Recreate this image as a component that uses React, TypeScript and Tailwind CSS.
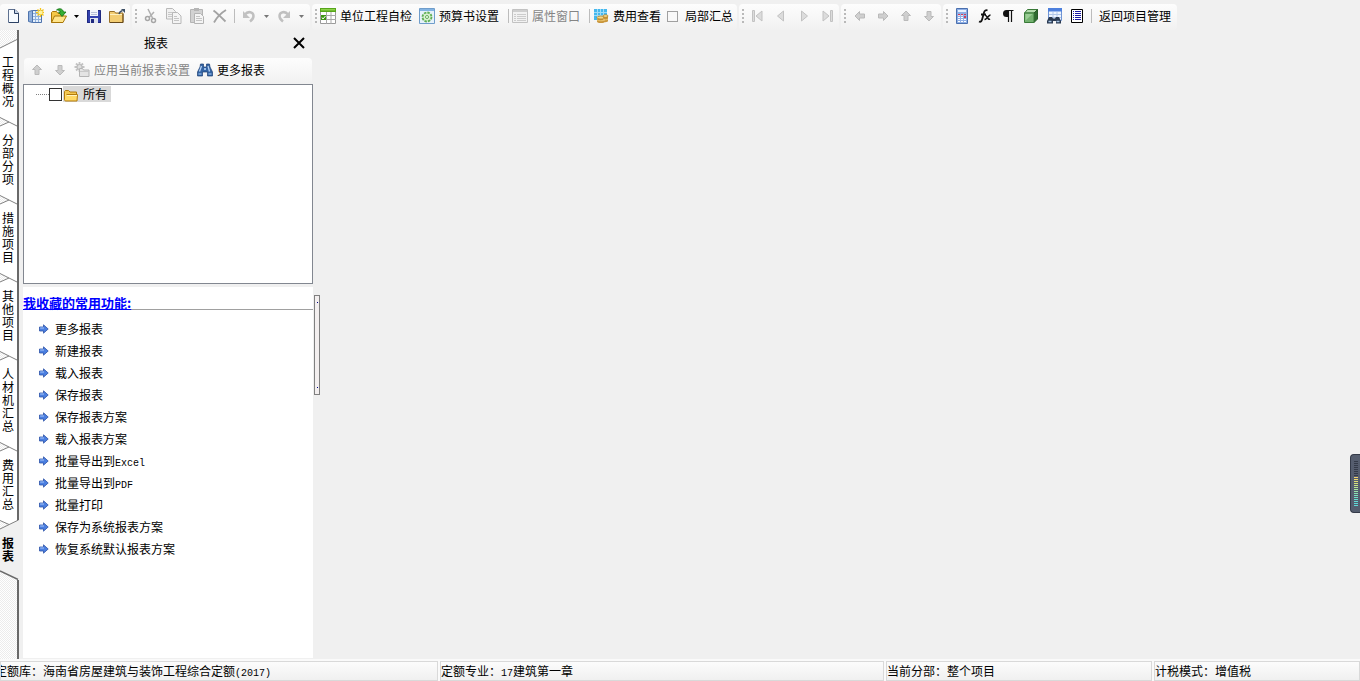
import React from 'react';
import clsx from 'clsx';

interface IconProps {
  children: React.ReactNode;
  size?: number;
}

const Icon: React.FC<IconProps> = ({ children, size = 16 }) => (
  <svg width={size} height={size} viewBox={`0 0 ${size} ${size}`} fill="none" className="shrink-0" aria-hidden="true">
    {children}
  </svg>
);

/* File icons */

const NewIcon = () => (
  <Icon>
    <path d="M3.5 1.5h6.5l3.5 3.5v9.5h-10z" fill="#f7fbff" stroke="#5f7190" />
    <path d="M4 14.5h9.5v-9" stroke="#2c4164" />
    <path d="M9.5 1.5v4h4" fill="#c5d5ea" stroke="#2c4164" />
  </Icon>
);

const NewProjectIcon = () => (
  <Icon>
    <path d="M.5 3.500l4-1v12l-4-1z" fill="#8fafdc" stroke="#4f74ad" />
    <path d="M4.500 2.500h9v12h-9z" fill="#e4effb" stroke="#4f74ad" />
    <path d="M5 5.500h8M5 8.500h8M5 11.500h8M7.500 3v11M10.500 3v11M1 6.500h3M1 9.500h3" stroke="#8fb0dc" />
    <path d="M12.500 0v9M8 4.500h8M9.500 1.500l6 6M15.500 1.500l-6 6" stroke="#f5c518" strokeWidth="1.300" />
    <circle cx="12.500" cy="4.500" r="2" fill="#fff3a0" />
  </Icon>
);

const OpenIcon = () => (
  <Icon>
    <path d="M.5 14.500v-10l1-1h4l1.500 2h5v3" fill="#f5c848" stroke="#a87608" />
    <path d="M.5 14.500l3-6.500h12l-3.500 6.500z" fill="#ffe48a" stroke="#a87608" />
    <path d="M5.500 2C8.500-.5 12 1 12.500 4H15l-4 4.500L7.500 4h2C9.200 2.500 7.500 1.800 5.500 2z" fill="#35b035" stroke="#137313" strokeWidth=".8" />
  </Icon>
);

const SaveIcon = () => (
  <Icon>
    <path d="M1 2h13l1 1v12H1z" fill="#3341ae" />
    <path d="M1.500 2.500h13v12h-13z" stroke="#202a80" />
    <path d="M4 2h8v6H4z" fill="#f2f4fb" />
    <path d="M5 4.500h6M5 6.500h6" stroke="#b6bfd8" />
    <path d="M4 10h8v5H4z" fill="#dfe3ee" />
    <path d="M5 11h3v4H5z" fill="#202a80" />
  </Icon>
);

const ExportFolderIcon = () => (
  <Icon>
    <path d="M.5 14.500v-11h5l1 1.500h7.500v9.500z" fill="#f3cd73" stroke="#987029" />
    <path d="M1 6.500h12" stroke="#fff1c0" />
    <path d="M1 14.500h13V6" stroke="#67491a" />
    <path d="M10 6c.5-2 1.500-3 3.500-3.500" stroke="#3c4f65" strokeWidth="1.500" />
    <path d="M12 1h4v4z" fill="#3c4f65" />
  </Icon>
);

/* Editing icons, all of them in their disabled look */

const CutIcon = () => (
  <Icon>
    <path d="M5 1l4.500 9M11 4l-5 5.500" stroke="#b0b0b0" strokeWidth="1.500" />
    <circle cx="4.500" cy="10.500" r="2" stroke="#a6a6a6" strokeWidth="1.500" />
    <circle cx="10.500" cy="12.500" r="2" stroke="#a6a6a6" strokeWidth="1.500" />
  </Icon>
);

const CopyIcon = () => (
  <Icon>
    <path d="M.5.5h6l3 3v7.500h-9z" fill="#f1f1f1" stroke="#b8b8b8" />
    <path d="M2 4.500h5M2 6.500h5M2 8.500h4" stroke="#c8c8c8" />
    <path d="M6.500 4.500h5l3.500 3.500v7.500h-8.500z" fill="#f4f4f4" stroke="#b8b8b8" />
    <path d="M8 8.500h3M8 10.500h5M8 12.500h5" stroke="#c4c4c4" />
  </Icon>
);

const PasteIcon = () => (
  <Icon>
    <path d="M1.500 1.500h12v13h-12z" fill="#d2d2d2" stroke="#b4b4b4" />
    <path d="M5 0h5v3H5z" fill="#b5b5b5" />
    <path d="M5.500 5.500h6l3 3v7h-9z" fill="#f4f4f4" stroke="#b4b4b4" />
    <path d="M7 8.500h4M7 10.500h6M7 12.500h6" stroke="#c4c4c4" />
  </Icon>
);

const DeleteIcon = () => (
  <Icon>
    <path d="M1.500 2.500c4 3 8 7 12 11M14 2C9 5 5 9 2 14.500" stroke="#a3a3a3" strokeWidth="1.800" />
  </Icon>
);

const UndoIcon = ({ flip = false }: { flip?: boolean }) => (
  <Icon>
    <g transform={flip ? 'matrix(-1 0 0 1 16 0)' : undefined}>
      <path d="M4 6.500C7 2.500 12.500 4 12.500 8c0 2.500-1.500 4-3.500 5.500" stroke="#c0c0c0" strokeWidth="2.500" />
      <path d="M2 3v7h7z" fill="#c2c2c2" />
    </g>
  </Icon>
);

/* Project icons */

const CheckTableIcon = () => (
  <Icon>
    <path d="M.5 1.500h15v14H.5z" fill="#fff" stroke="#9b9b9b" />
    <path d="M0 0h16v4H0z" fill="#57a51b" />
    <path d="M1 1h14v1.500H1z" fill="#8ed34b" />
    <path d="M0 7.500h16M0 11.500h16M6.500 4v12M11 4v12" stroke="#a9a9a9" />
    <path d="M1 7h5v5H1z" fill="#3c9614" />
    <path d="M2 9.500l1 1.500 2.500-3" stroke="#fff" />
  </Icon>
);

const SettingsIcon = () => (
  <Icon>
    <path d="M.5.5h15v15H.5z" fill="#e6f2fb" stroke="#6f9dcb" />
    <path d="M1 1h14v2H1z" fill="#83b4e3" />
    <circle cx="8" cy="9" r="4.500" fill="#d9f0d1" stroke="#5fae55" strokeWidth="1.800" strokeDasharray="2.500 1" />
    <circle cx="8" cy="9" r="1.500" fill="#fff" stroke="#5fae55" />
  </Icon>
);

const PropertyIcon = () => (
  <Icon>
    <path d="M.5 1.500h15v13H.5z" fill="#f2f2f2" stroke="#c2c2c2" />
    <path d="M1 2h14v2H1z" fill="#cfcfcf" />
    <path d="M2 6.500h2M5 6.500h9M2 8.500h2M5 8.500h9M2 10.500h2M5 10.500h9M2 12.500h2M5 12.500h9" stroke="#cccccc" />
  </Icon>
);

const CostIcon = () => (
  <Icon>
    <path d="M1 1h13v11H1z" fill="#45b8ee" />
    <path d="M1 4.500h13M1 7.500h13M4.500 1v11M7.500 1v11M10.500 1v11" stroke="#9fdcf8" />
    <path d="M4 9.500v4c0 2 8 2 8 0v-4z" fill="#c9953a" />
    <ellipse cx="8" cy="9.500" rx="4" ry="1.500" fill="#f5d888" stroke="#b07d22" strokeWidth=".7" />
    <path d="M10 8v5c0 1.500 5 1.500 5 0V8z" fill="#c9953a" />
    <ellipse cx="12.500" cy="8" rx="2.500" ry="1.300" fill="#f5d888" stroke="#b07d22" strokeWidth=".7" />
    <path d="M4 12c1 1 6 1 8 0M10 11c1 1 4 1 5 0" stroke="#f5d888" strokeWidth=".7" />
  </Icon>
);

/* Navigation icons */

const JumpIcon = ({ flip = false, bar = false }: { flip?: boolean; bar?: boolean }) => (
  <Icon>
    <g transform={flip ? 'matrix(-1 0 0 1 16 0)' : undefined} stroke="#c2c2c2" fill="#dcdcdc">
      {bar && <path d="M2.500 2.500h2v11h-2z" />}
      <path d={bar ? 'M12 3v10L6 8z' : 'M10.500 3v10L4.500 8z'} />
    </g>
  </Icon>
);

const ArrowIcon = ({ turn }: { turn: number }) => (
  <Icon>
    <path
      d="M3 8l4.500-4.500v2.500h5v4h-5v2.500z"
      fill="#cfcfcf"
      stroke="#bababa"
      transform={`rotate(${turn} 8 8)`}
    />
  </Icon>
);

/* Tool icons */

const CalculatorIcon = () => (
  <Icon>
    <path d="M2.500.5h11v15h-11z" fill="#8fb0e6" stroke="#4a6fae" />
    <path d="M4 2h8v2H4z" fill="#e8f2ff" />
    <path d="M4 9h2v1H4zM7 9h2v1H7zM4 11h2v1H4zM7 11h2v1H7zM10 11h2v1h-2zM4 13h2v1H4zM7 13h2v1H7zM10 13h2v1h-2z" fill="#fff" />
    <path d="M4 6h2v2H4zM7 6h2v2H7z" fill="#f4dfe8" />
    <path d="M4 6h2v1H4zM7 6h2v1H7zM10 6h2v1h-2zM10 8h2v2h-2z" fill="#cf3f5c" />
  </Icon>
);

const FunctionIcon = () => (
  <Icon>
    <path d="M2 13.500c2 1 3-1 3.500-3.500L7 4.500c.5-2 2-2.800 3.500-2M4 6.500h5" stroke="#111" strokeWidth="1.800" />
    <path d="M8 7.500c2-1 2.500 5 5 3.500M13.500 7C11.500 7 10 11.500 7.500 11.500" stroke="#111" strokeWidth="1.500" />
  </Icon>
);

const PilcrowIcon = () => (
  <Icon>
    <path d="M13 2H6.500a3.500 3.500 0 000 7H8V2z" fill="#111" />
    <path d="M8.500 2v12M11.500 2v12M7 2.500h6.500" stroke="#111" strokeWidth="1.200" />
  </Icon>
);

const CubeIcon = () => (
  <Icon>
    <path d="M1.500 5l3-3.500h10L11 5z" fill="#b4dcae" stroke="#397a38" />
    <path d="M11 5l3.500-3.500V11L11 14.500z" fill="#2f6b30" stroke="#285c29" />
    <path d="M1.500 5H11v9.500H1.500z" fill="#74b270" stroke="#397a38" />
    <path d="M2.500 6h7l-7 6.500z" fill="#9acd94" />
  </Icon>
);

const FindTableIcon = () => (
  <Icon>
    <path d="M2.500.5h13v12h-13z" fill="#eef5ff" stroke="#6f94d4" />
    <path d="M2 0h14v3.500H2z" fill="#4e80dd" />
    <path d="M3 6.500h12M3 9.500h12M7 4v8M11 4v8" stroke="#b0c7ea" />
    <path d="M3 9h3l1 1.500h2l1-1.500h3l2 4v2.500h-5V13H7v2.500H1V13z" fill="#2a3a52" />
    <path d="M2.500 13.500h3M10.500 13.500h3" stroke="#a9c6e6" strokeWidth="1.500" />
  </Icon>
);

const ListIcon = () => (
  <Icon>
    <path d="M2.500 1.500h11v13h-11z" fill="#fff" stroke="#000" />
    <path d="M4 3.500h1M6 3.500h6M4 5.500h1M6 5.500h6M4 7.500h1M6 7.500h6M4 9.500h1M6 9.500h6M4 11.500h1M6 11.500h6" stroke="#1b1ba4" />
  </Icon>
);

const ApplyIcon = () => (
  <Icon>
    <path d="M5.500 0v10M.5 5h10M2 1.500l7 7M9 1.500l-7 7" stroke="#c3c3c3" strokeWidth="1.800" />
    <circle cx="5.500" cy="5" r="2.500" fill="#dedede" stroke="#b9b9b9" />
    <path d="M5.500 6.500h3l1 1.500h5.500v6.500H5.500z" fill="#e4e4e4" stroke="#b4b4b4" />
    <path d="M6 9.500h9" stroke="#c9c9c9" />
  </Icon>
);

const BinocularsIcon = () => (
  <Icon>
    <path d="M3.500 2h3v3h3V2h3l.5 3 2.500 5v4h-5v-4h-5v4h-5v-4L3 5z" fill="#3464a4" stroke="#1d3f74" strokeWidth=".7" />
    <path d="M4.500 4L2.500 9.500M11 4l1.500 5.500" stroke="#b5d2f4" strokeWidth="1.300" />
    <path d="M1.500 12h3M11.500 12h3" stroke="#86afe0" strokeWidth="1.500" />
    <path d="M7 6h2v2H7z" fill="#9cc0ec" />
  </Icon>
);

const FolderIcon = () => (
  <Icon>
    <path d="M1.500 13.500v-8l1-1h3l1.500 1.500h6.500v2" fill="#f3c64f" stroke="#b27a0c" />
    <path d="M3.500 8.500h11l-.5 6.500H3c-1 0-1.500-.5-1.500-1.500V6" fill="#ffd965" stroke="#b27a0c" />
    <path d="M4 9.500h10" stroke="#fff3bd" />
  </Icon>
);

const BulletIcon = () => (
  <Icon size={10}>
    <path d="M.5 3h4V.8L9.200 5 4.500 9.200V7h-4z" fill="#4b7fe0" stroke="#2d53a8" strokeWidth=".8" />
    <path d="M1.200 4h3.800" stroke="#a9c8fa" />
  </Icon>
);

/* Toolbar parts */

const Group: React.FC<{ children: React.ReactNode; grip?: boolean; className?: string }> = ({
  children,
  grip = true,
  className,
}) => (
  <div className={clsx('flex items-center rounded-sm bg-linear-to-b from-[#fdfdfd] to-[#f1f1f1] pb-0.5', className)}>
    {grip && (
      <span className="flex w-[7px] flex-col items-center gap-0.5">
        <i className="size-0.5 bg-[#b9b9b9]" />
        <i className="size-0.5 bg-[#b9b9b9]" />
        <i className="size-0.5 bg-[#b9b9b9]" />
        <i className="size-0.5 bg-[#b9b9b9]" />
      </span>
    )}
    {children}
  </div>
);

const IconButton: React.FC<{ label: string; disabled?: boolean; children: React.ReactNode }> = ({
  label,
  disabled,
  children,
}) => (
  <button type="button" aria-label={label} disabled={disabled} className="flex h-6 w-[23px] items-center justify-center">
    {children}
  </button>
);

const TextButton: React.FC<{ icon: React.ReactNode; disabled?: boolean; children: React.ReactNode }> = ({
  icon,
  disabled,
  children,
}) => (
  <button
    type="button"
    disabled={disabled}
    className="flex h-6 items-center gap-1 pr-1.5 pl-px whitespace-nowrap disabled:text-[#858585]"
  >
    {icon}
    {children}
  </button>
);

const Caret: React.FC<{ label: string; disabled?: boolean }> = ({ label, disabled }) => (
  <button type="button" aria-label={label} disabled={disabled} className="flex h-6 w-3 items-center justify-center text-black disabled:text-[#777]">
    <svg width="5" height="3" viewBox="0 0 5 3" aria-hidden="true">
      <path d="M0 0h5L2.500 3z" fill="currentColor" />
    </svg>
  </button>
);

const Separator = () => (
  <span className="flex w-1.5 justify-center">
    <i className="h-[14px] w-px bg-[#bcbcbc]" />
  </span>
);

const Toolbar = () => (
  <div className="flex h-[30px] gap-0.5 pt-1">
    <Group grip={false} className="pr-0.5 pl-px">
      <IconButton label="新建"><NewIcon /></IconButton>
      <IconButton label="新建项目"><NewProjectIcon /></IconButton>
      <IconButton label="打开"><OpenIcon /></IconButton>
      <Caret label="打开列表" />
      <IconButton label="保存"><SaveIcon /></IconButton>
      <IconButton label="导出"><ExportFolderIcon /></IconButton>
    </Group>
    <Group className="pr-[3px]">
      <IconButton label="剪切" disabled><CutIcon /></IconButton>
      <IconButton label="复制" disabled><CopyIcon /></IconButton>
      <IconButton label="粘贴" disabled><PasteIcon /></IconButton>
      <IconButton label="删除" disabled><DeleteIcon /></IconButton>
      <Separator />
      <IconButton label="撤销" disabled><UndoIcon /></IconButton>
      <Caret label="撤销列表" disabled />
      <IconButton label="恢复" disabled><UndoIcon flip /></IconButton>
      <Caret label="恢复列表" disabled />
    </Group>
    <Group className="pr-1">
      <TextButton icon={<CheckTableIcon />}>单位工程自检</TextButton>
      <TextButton icon={<SettingsIcon />}>预算书设置</TextButton>
      <Separator />
      <TextButton icon={<PropertyIcon />} disabled>属性窗口</TextButton>
      <Separator />
      <TextButton icon={<CostIcon />}>费用查看</TextButton>
      <label className="flex items-center gap-[7px] whitespace-nowrap">
        <input type="checkbox" className="size-[11px] appearance-none border border-[#a0a0a0] bg-[#f8f8f8] checked:bg-[#555]" />
        局部汇总
      </label>
    </Group>
    <Group className="pr-px">
      <IconButton label="第一页" disabled><JumpIcon bar /></IconButton>
      <IconButton label="上一页" disabled><JumpIcon /></IconButton>
      <IconButton label="下一页" disabled><JumpIcon flip /></IconButton>
      <IconButton label="最后一页" disabled><JumpIcon flip bar /></IconButton>
    </Group>
    <Group className="pr-px">
      <IconButton label="左移" disabled><ArrowIcon turn={0} /></IconButton>
      <IconButton label="右移" disabled><ArrowIcon turn={180} /></IconButton>
      <IconButton label="上移" disabled><ArrowIcon turn={90} /></IconButton>
      <IconButton label="下移" disabled><ArrowIcon turn={270} /></IconButton>
    </Group>
    <Group>
      <IconButton label="计算器"><CalculatorIcon /></IconButton>
      <IconButton label="函数"><FunctionIcon /></IconButton>
      <IconButton label="特殊符号"><PilcrowIcon /></IconButton>
      <IconButton label="图元"><CubeIcon /></IconButton>
      <IconButton label="查找"><FindTableIcon /></IconButton>
      <IconButton label="列表"><ListIcon /></IconButton>
      <Separator />
      <button type="button" className="h-6 pr-1.5 pl-[5px] whitespace-nowrap">返回项目管理</button>
    </Group>
  </div>
);

/* Vertical tabs on the left edge */

const TABS = ['工程概况', '分部分项', '措施项目', '其他项目', '人材机汇总', '费用汇总'];

const HATCH = 'bg-[repeating-conic-gradient(#fff_0_25%,#ececec_0_50%)] bg-[length:2px_2px]';

type EdgeKind = 'first' | 'between' | 'active' | 'last';

const TabEdge: React.FC<{ kind: EdgeKind }> = ({ kind }) => (
  <svg width="19" height="10" viewBox="0 0 19 10" className={clsx('block shrink-0', HATCH)} fill="none" aria-hidden="true">
    {kind === 'first' && (
      <>
        <path d="M0 9L18 0v10H0z" fill="#fff" />
        <path d="M0 9L18 0" stroke="#808080" />
        <path d="M18 0v10" stroke="#696969" strokeWidth="2" />
      </>
    )}
    {kind === 'between' && (
      <>
        <path d="M0 0h18v10H0V9l9-4.500z" fill="#fff" />
        <path d="M0 .5L18 9.500M0 9l9-4" stroke="#808080" />
        <path d="M18 0v10" stroke="#696969" strokeWidth="2" />
      </>
    )}
    {kind === 'active' && (
      <>
        <path d="M0 0h18L9 4.500z" fill="#fff" />
        <path d="M19 0v10H0V9L18 0z" fill="#f0f0f0" />
        <path d="M0 .5l9 4M0 9L18.500 0" stroke="#808080" />
      </>
    )}
    {kind === 'last' && (
      <>
        <path d="M0 0h19v10L0 1z" fill="#f0f0f0" />
        <path d="M0 1l18 8.500" stroke="#696969" strokeWidth="1.500" />
      </>
    )}
  </svg>
);

const SideTabs = () => (
  <nav className="flex w-[19px] shrink-0 flex-col">
    <div className={clsx('h-[9px] shrink-0 border-r-2 border-[#696969]', HATCH)} />
    {TABS.map((tab, index) => (
      <button key={tab} type="button" className="block shrink-0 text-left">
        <TabEdge kind={index === 0 ? 'first' : 'between'} />
        <span className="block border-r-2 border-[#696969] bg-white pt-1.5 pb-2.5 pl-0.5">
          <span className="block w-[13px] leading-[13px] break-all">{tab}</span>
        </span>
      </button>
    ))}
    <button type="button" className="block shrink-0 text-left font-bold">
      <TabEdge kind="active" />
      <span className="block pt-1.5 pb-2 pl-0.5">
        <span className="block w-[13px] leading-[13px] break-all">报表</span>
      </span>
      <TabEdge kind="last" />
    </button>
    <div className={clsx('flex-1 border-r-2 border-[#696969]', HATCH)} />
  </nav>
);

/* Report panel */

const FAVORITES: { text: string; latin?: string }[] = [
  { text: '更多报表' },
  { text: '新建报表' },
  { text: '载入报表' },
  { text: '保存报表' },
  { text: '保存报表方案' },
  { text: '载入报表方案' },
  { text: '批量导出到', latin: 'Excel' },
  { text: '批量导出到', latin: 'PDF' },
  { text: '批量打印' },
  { text: '保存为系统报表方案' },
  { text: '恢复系统默认报表方案' },
];

// half-width characters take half of a 12px ideograph
const Latin: React.FC<{ children: React.ReactNode }> = ({ children }) => (
  <span className="font-['Liberation_Mono',monospace] text-[10px] leading-none">{children}</span>
);

const ReportPanel = () => (
  <aside className="ml-1 flex w-[290px] shrink-0 flex-col">
    <header className="flex h-7 items-center pr-2 pb-0.5">
      <h1 className="flex-1 pr-1 text-center">报表</h1>
      <button type="button" aria-label="关闭" className="flex size-3 items-center justify-center">
        <svg width="12" height="12" viewBox="0 0 12 12" aria-hidden="true">
          <path d="M1 1l10 10M11 1L1 11" stroke="#000" strokeWidth="2" />
        </svg>
      </button>
    </header>

    <div className="mx-px flex h-[26px] items-center rounded-sm bg-linear-to-b from-[#fdfdfd] to-[#f1f1f1] pb-0.5 pl-px">
      <IconButton label="上移" disabled><ArrowIcon turn={90} /></IconButton>
      <IconButton label="下移" disabled><ArrowIcon turn={270} /></IconButton>
      <div className="flex pl-0.5">
        <TextButton icon={<ApplyIcon />} disabled>应用当前报表设置</TextButton>
        <TextButton icon={<BinocularsIcon />}>更多报表</TextButton>
      </div>
    </div>

    <div className="h-[200px] shrink-0 border border-[#828790] bg-white pt-px pl-3">
      <label className="flex h-4 items-center">
        <span className="w-[13px] border-t border-dotted border-[#808080]" />
        <input type="checkbox" className="size-[13px] appearance-none border border-[#333] bg-white checked:bg-[#333]" />
        <span className="ml-px flex h-4 items-center gap-1 bg-[#d9d9d9] pr-1">
          <FolderIcon />
          所有
        </span>
      </label>
    </div>

    <section className="mt-[3px] mb-px flex-1 bg-white">
      <h2 className="flex h-[23px] items-end border-b border-[#a0a0a0] text-[13px] leading-[13px] font-bold text-[#0000ff] underline">
        我收藏的常用功能:
      </h2>
      <ul className="pt-2">
        {FAVORITES.map(({ text, latin }) => (
          <li key={text + (latin ?? '')}>
            <button type="button" className="flex h-[22px] items-center gap-1.5 pl-4">
              <BulletIcon />
              <span>
                {text}
                {latin && <Latin>{latin}</Latin>}
              </span>
            </button>
          </li>
        ))}
      </ul>
    </section>
  </aside>
);

const Splitter = () => (
  <button
    type="button"
    aria-label="折叠面板"
    className="ml-px flex h-[100px] w-1.5 shrink-0 flex-col items-center justify-between self-center border border-[#808080] bg-[#f3efef] py-1.5"
  >
    <i className="size-px bg-[#000080]" />
    <i className="size-px bg-[#000080]" />
  </button>
);

/* Level meter on the right edge of the window */

const METER = [
  'bg-[#343a48]', 'bg-[#343a48]', 'bg-[#343a48]', 'bg-[#343a48]', 'bg-[#343a48]', 'bg-[#343a48]', 'bg-[#343a48]', 'bg-[#343a48]',
  'bg-[#f2d36c]', 'bg-[#ecd86e]', 'bg-[#e2de74]', 'bg-[#d6e27c]', 'bg-[#c8e486]', 'bg-[#b8e692]', 'bg-[#a8e69e]', 'bg-[#98e6aa]',
  'bg-[#88e4b4]', 'bg-[#7ce2be]', 'bg-[#70e0c6]', 'bg-[#68dece]', 'bg-[#62dcd4]', 'bg-[#5edad8]', 'bg-[#5edad8]',
];

const LevelMeter = () => (
  <button
    type="button"
    aria-label="展开"
    className="absolute top-[454px] right-0 flex h-[59px] w-2.5 flex-col items-center gap-px rounded-l-sm border border-r-0 border-[#343a48] bg-[#555d6e] pt-1.5"
  >
    {METER.map((color, index) => (
      <i key={index} className={clsx('h-px w-1 shrink-0', color)} />
    ))}
  </button>
);

const StatusCell: React.FC<{ children: React.ReactNode; clipped?: boolean }> = ({ children, clipped }) => (
  <div className="h-5 overflow-hidden border border-[#d9d9d9] bg-linear-to-b from-[#fcfcfc] to-[#f0f0f0] leading-[18px] whitespace-nowrap">
    <span className={clsx(clipped && '-ml-1.5')}>{children}</span>
  </div>
);

const StatusBar = () => (
  <footer className="grid h-[22px] shrink-0 grid-cols-[438fr_444fr_266fr_206fr] gap-0.5 bg-[#fafafa] pt-0.5">
    <StatusCell clipped>定额库：海南省房屋建筑与装饰工程综合定额<Latin>(2017)</Latin></StatusCell>
    <StatusCell>定额专业：<Latin>17</Latin>建筑第一章</StatusCell>
    <StatusCell>当前分部：整个项目</StatusCell>
    <StatusCell>计税模式：增值税</StatusCell>
  </footer>
);

export default function App() {
  return (
    <div className="relative flex min-h-screen flex-col overflow-hidden bg-[#f0f0f0] font-['Noto_Sans_CJK_SC',sans-serif] text-[12px] leading-4 text-black">
      <Toolbar />
      <div className="flex flex-1">
        <SideTabs />
        <ReportPanel />
        <Splitter />
        <main className="flex-1" />
      </div>
      <StatusBar />
      <LevelMeter />
    </div>
  );
}
